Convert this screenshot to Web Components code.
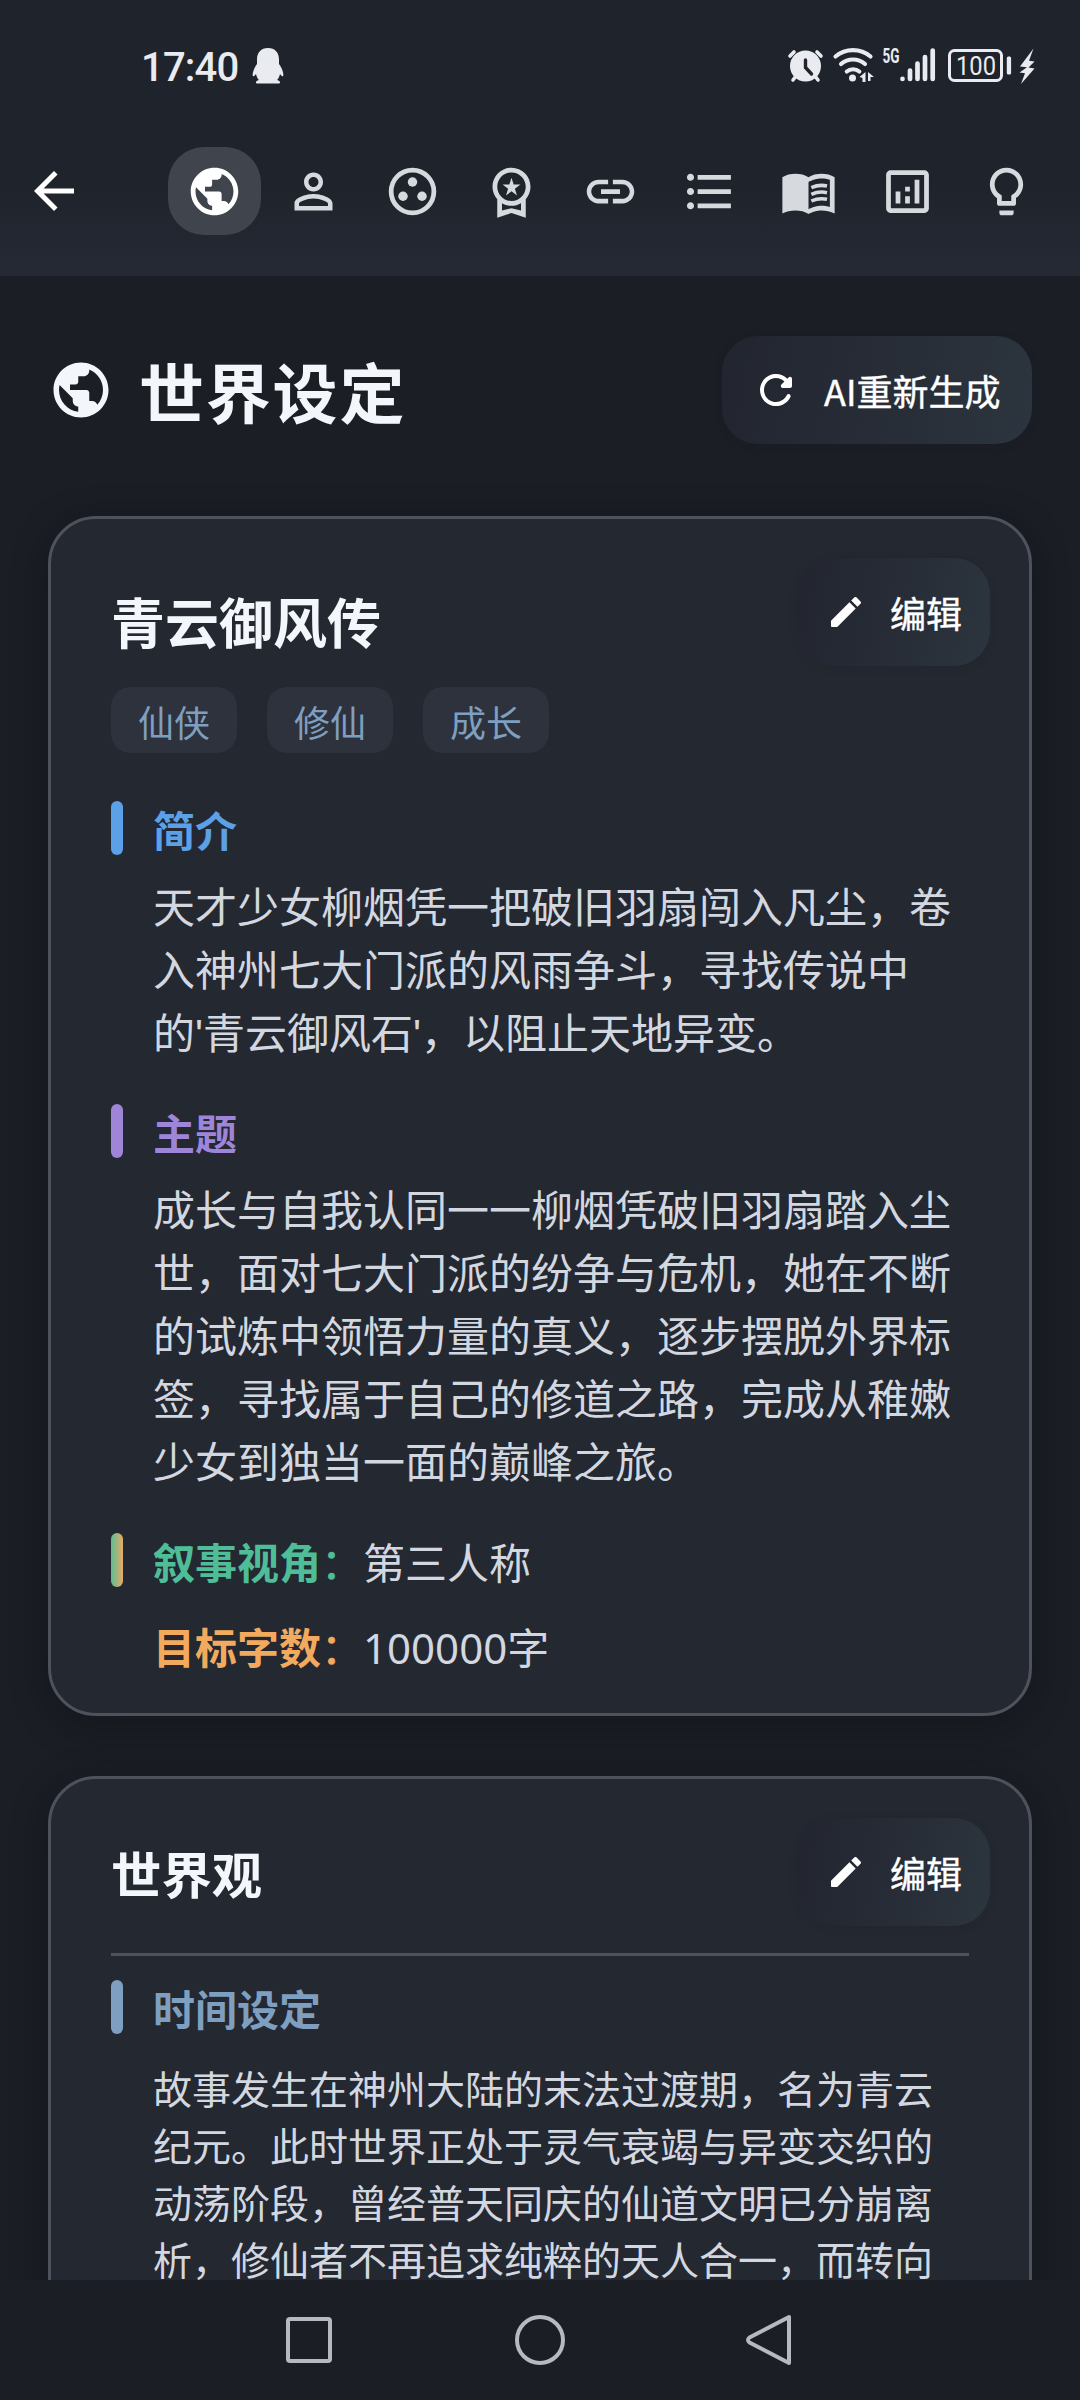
<!DOCTYPE html>
<html lang="zh-CN">
<head>
<meta charset="utf-8">
<title>世界设定</title>
<style>
html,body{margin:0;padding:0;background:#1b1e25}
body{width:1080px;height:2400px;overflow:hidden;font-family:"Noto Sans CJK SC",sans-serif;color:#d3d7e0}
.q{font-family:"Liberation Sans",sans-serif;line-height:0}
.n{font-family:"Noto Sans",sans-serif;line-height:0}
</style>
</head>
<body>
<app-screen>
  <status-bar slot="status" time="17:40"></status-bar>
  <tab-strip slot="tabs"></tab-strip>
  <page-title slot="content" label="世界设定"><pill-button slot="action" icon="refresh" size="48" wide>AI重新生成</pill-button></page-title>
  <setting-card slot="content" variant="book" heading="青云御风传">
    <tag-row><tag-chip>仙侠</tag-chip><tag-chip>修仙</tag-chip><tag-chip>成长</tag-chip></tag-row>
    <text-section label="简介" style="--accent:#5ca0e8">天才少女柳烟凭一把破旧羽扇闯入凡尘，卷<br>入神州七大门派的风雨争斗，寻找传说中<br>的<span class="q">'</span>青云御风石<span class="q">'</span>，以阻止天地异变。</text-section>
    <text-section label="主题" style="--accent:#9f85d8">成长与自我认同一一柳烟凭破旧羽扇踏入尘<br>世，面对七大门派的纷争与危机，她在不断<br>的试炼中领悟力量的真义，逐步摆脱外界标<br>签，寻找属于自己的修道之路，完成从稚嫩<br>少女到独当一面的巅峰之旅。</text-section>
    <field-row label="叙事视角" bar style="--accent:#4fbd98">第三人称</field-row>
    <field-row label="目标字数" style="--accent:#f2ab5e"><span class="n">100000</span>字</field-row>
  </setting-card>
  <setting-card slot="content" variant="world" heading="世界观">
    <text-section label="时间设定" small style="--accent:#7f9fc0">故事发生在神州大陆的末法过渡期，名为青云<br>纪元。此时世界正处于灵气衰竭与异变交织的<br>动荡阶段，曾经普天同庆的仙道文明已分崩离<br>析，修仙者不再追求纯粹的天人合一，而转向</text-section>
  </setting-card>
  <system-nav slot="nav"></system-nav>
</app-screen>
<script>
const ICONS = {
  back: '<path d="M20 11H7.83l5.59-5.59L12 4l-8 8 8 8 1.41-1.41L7.83 13H20v-2z"/>',
  globe: '<path d="M12 2C6.48 2 2 6.48 2 12s4.48 10 10 10 10-4.48 10-10S17.52 2 12 2zm-1 17.93c-3.95-.49-7-3.85-7-7.93 0-.62.08-1.21.21-1.79L9 15v1c0 1.1.9 2 2 2v1.93zm6.9-2.54c-.26-.81-1-1.39-1.9-1.39h-1v-3c0-.55-.45-1-1-1H8v-2h2c.55 0 1-.45 1-1V7h2c1.1 0 2-.9 2-2v-.41c2.93 1.19 5 4.06 5 7.41 0 2.08-.8 3.97-2.1 5.39z"/>',
  person: '<path d="M12 5.9c1.16 0 2.1.94 2.1 2.1s-.94 2.1-2.1 2.1S9.9 9.16 9.9 8s.94-2.1 2.1-2.1m0 9c2.97 0 6.1 1.46 6.1 2.1v1.1H5.9V17c0-.64 3.13-2.1 6.1-2.1M12 4C9.79 4 8 5.79 8 8s1.79 4 4 4 4-1.79 4-4-1.79-4-4-4zm0 9c-2.67 0-8 1.34-8 4v3h16v-3c0-2.66-5.33-4-8-4z"/>',
  group: '<circle cx="12" cy="12" r="9" fill="none" stroke="currentColor" stroke-width="2"/><circle cx="12" cy="8" r="2"/><circle cx="8" cy="14" r="2"/><circle cx="16" cy="14" r="2"/>',
  medal: '<path d="M9.68 13.69 12 11.93l2.31 1.76-.88-2.85L15.75 9h-2.84L12 6.19 11.09 9H8.25l2.31 1.84-.88 2.85zM20 10c0-4.42-3.58-8-8-8s-8 3.58-8 8c0 2.03.76 3.87 2 5.28V23l6-2 6 2v-7.72c1.24-1.41 2-3.25 2-5.28zm-8-6c3.31 0 6 2.69 6 6s-2.69 6-6 6-6-2.69-6-6 2.69-6 6-6zm0 15-4 1.02v-3.1c1.18.68 2.54 1.08 4 1.08s2.82-.4 4-1.08v3.1L12 19z"/>',
  link: '<path d="M3.9 12c0-1.71 1.39-3.1 3.1-3.1h4V7H7c-2.76 0-5 2.24-5 5s2.24 5 5 5h4v-1.9H7c-1.71 0-3.1-1.39-3.1-3.1zM8 13h8v-2H8v2zm9-6h-4v1.9h4c1.71 0 3.1 1.39 3.1 3.1s-1.39 3.1-3.1 3.1h-4V17h4c2.76 0 5-2.24 5-5s-2.24-5-5-5z"/>',
  list: '<path d="M4 10.5c-.83 0-1.5.67-1.5 1.5s.67 1.5 1.5 1.5 1.5-.67 1.5-1.5-.67-1.5-1.5-1.5zm0-6c-.83 0-1.5.67-1.5 1.5S3.17 7.5 4 7.5 5.5 6.83 5.5 6 4.83 4.5 4 4.5zm0 12c-.83 0-1.5.68-1.5 1.5s.68 1.5 1.5 1.5 1.5-.68 1.5-1.5-.67-1.5-1.5-1.5zM7 19h14v-2H7v2zm0-6h14v-2H7v2zm0-8v2h14V5H7z"/>',
  book: '<path fill-rule="evenodd" d="M17.5 4.5c-1.95 0-4.05.4-5.5 1.5-1.45-1.1-3.55-1.5-5.5-1.5S2.45 4.9 1 6v15.3C2.4 20.4 4.6 20 6.5 20s4.05.4 5.5 1.5c1.35-.85 3.8-1.5 5.5-1.5 1.65 0 3.9.4 5.5 1.3V6c-1.5-1.1-3.55-1.5-5.5-1.5zM21 18.5c-1.1-.35-2.3-.5-3.5-.5-1.7 0-4.15.65-5.5 1.5V8c1.35-.85 3.8-1.5 5.5-1.5 1.2 0 2.4.15 3.5.5v11.5z"/><path d="M13.2 10.4c2-.9 4.5-1.2 6.6-.7M13.2 13.2c2-.9 4.500-1.200 6.600-.7M13.2 16c2-.9 4.500-1.200 6.600-.7" fill="none" stroke="currentColor" stroke-width="1.500"/>',
  chart: '<path d="M19 3H5c-1.100 0-2 .9-2 2v14c0 1.100.9 2 2 2h14c1.100 0 2-.9 2-2V5c0-1.100-.9-2-2-2zm0 16H5V5h14v14zM7 12h2v5H7zM15 7h2v10h-2zM11 14h2v3h-2zM11 10h2v2h-2z"/>',
  bulb: '<path d="M9 21c0 .55.45 1 1 1h4c.55 0 1-.45 1-1v-1H9v1zm3-19C8.14 2 5 5.14 5 9c0 2.38 1.19 4.47 3 5.74V17c0 .55.45 1 1 1h6c.55 0 1-.45 1-1v-2.26c1.81-1.27 3-3.36 3-5.74 0-3.86-3.14-7-7-7zm2.85 11.1l-.85.6V16h-4v-2.3l-.85-.6C7.8 12.16 7 10.63 7 9c0-2.76 2.24-5 5-5s5 2.24 5 5c0 1.63-.8 3.16-2.15 4.1z"/>',
  refresh: '<path d="M17.65 6.35c-1.63-1.63-3.94-2.57-6.48-2.31-3.67.37-6.69 3.35-7.1 7.02C3.52 15.91 7.27 20 12 20c3.19 0 5.93-1.87 7.21-4.56.32-.67-.16-1.44-.9-1.44-.37 0-.72.2-.88.53-1.13 2.43-3.84 3.97-6.8 3.31-2.22-.49-4.01-2.3-4.48-4.52C5.31 9.44 8.26 6 12 6c1.66 0 3.14.69 4.22 1.78l-1.51 1.51c-.63.63-.19 1.71.7 1.71H19c.55 0 1-.45 1-1V6.41c0-.89-1.08-1.34-1.71-.71l-.64.65z"/>',
  edit: '<path d="M3 17.46v3.04c0 .28.22.5.5.5h3.04c.13 0 .26-.05.35-.15L17.81 9.94l-3.75-3.75L3.15 17.1c-.1.1-.15.22-.15.36zM20.71 7.04c.39-.39.39-1.02 0-1.41l-2.34-2.34c-.39-.39-1.02-.39-1.41 0l-1.83 1.83 3.75 3.75 1.83-1.83z"/>'
};
const icon = (n, s) => `<svg width="${s}" height="${s}" viewBox="0 0 24 24" fill="currentColor">${ICONS[n]}</svg>`;
const define = (name, render) => customElements.define(name, class extends HTMLElement {
  constructor() { super(); this.attachShadow({ mode: 'open' }); }
  connectedCallback() { this.shadowRoot.innerHTML = '<style>:host,*{box-sizing:border-box}svg{display:block;flex:none}</style>' + render(this); }
});

define('app-screen', () => `<style>
:host{display:flex;flex-direction:column;width:1080px;height:2400px;background:#1b1e25}
header{height:276px;flex:none;background:linear-gradient(#1f242c 0,#1f242c 68%,#252934 100%)}
main{flex:1;min-height:0;overflow:hidden;padding:60px 48px 0;display:flex;flex-direction:column}
footer{height:120px;flex:none}</style>
<header><slot name="status"></slot><slot name="tabs"></slot></header><main><slot name="content"></slot></main><footer><slot name="nav"></slot></footer>`);

define('status-bar', el => `<style>
:host{display:flex;align-items:center;justify-content:space-between;height:132px;padding:0 44px 0 141px;color:#e9ebf0}
div{display:flex;align-items:center}
b{font:500 40px/44px Roboto,sans-serif;letter-spacing:-.8px;margin-right:13px;padding-top:4px}
text{font-family:Roboto,sans-serif}</style>
<div><b>${el.getAttribute('time')}</b><svg width="32" height="36" viewBox="0 0 32 36" fill="currentColor"><path d="M16 0C9 0 5 4.500 5 11.500V16c-3 4-4.600 8.500-4.300 11.500.2 1.500 1.600.8 3.300-1.500.5 2.300 1.400 4.300 2.900 6-1.900.5-2.900 1.200-2.900 2.400 0 .8.600 1.100 1.500 1.100h21c.9 0 1.500-.3 1.500-1.100 0-1.200-1-1.900-2.900-2.400 1.500-1.700 2.400-3.700 2.900-6 1.700 2.300 3.100 3 3.300 1.500.3-3-1.300-7.500-4.300-11.500v-4.500C27 4.500 23 0 16 0z"/></svg></div>
<div><svg width="250" height="52" viewBox="786 40 250 52" fill="currentColor">
<circle cx="805.500" cy="66" r="15.500"/><g fill="none" stroke="currentColor" stroke-width="3.600" stroke-linecap="round"><path d="M790 56l4-4M821 56l-4-4M793 80l3-4M818 80l-3-4"/></g><path d="M805.500 60v7.500l6 6.500" fill="none" stroke="#1f242c" stroke-width="3.400" stroke-linecap="round"/>
<g fill="none" stroke="currentColor" stroke-width="4.200" stroke-linecap="round"><path d="M835.500 56.500c10-8.500 25-8.500 35 0M841 64c7-6 17-6 24 0M846.800 71.500c3.500-3 9-3 12.500 0"/></g><circle cx="852.500" cy="78" r="3.500"/><path d="M859.500 77l6-5v10h-3v-4zM868 72l6 5h-3.500v4H868z"/>
<text x="882.500" y="63" font-size="21" font-weight="700" textLength="17" lengthAdjust="spacingAndGlyphs">5G</text>
<g fill="none" stroke="currentColor" stroke-width="4.700" stroke-linecap="round"><path d="M902.500 79v-.1M910 79v-8.500M917.500 79v-15.500M925 79v-22M932.700 79v-28.500"/></g>
<rect x="949.500" y="50.500" width="52" height="30" rx="5" fill="none" stroke="currentColor" stroke-width="3"/><rect x="1006.800" y="56.500" width="4.300" height="18" rx="1.500"/>
<text x="956" y="75" font-size="25" textLength="40" lengthAdjust="spacingAndGlyphs">100</text>
<path d="M1033.500 48.500L1020 66.500l7 .8-7.500 5.200 5.500.8-4 10.700 13.500-15.500-6-1 6-6-5.500-.8z"/></svg></div>`);

define('tab-strip', () => `<style>
:host{display:flex;align-items:center;height:118px;padding-left:24px;color:#d6d9dd}
.back{color:#fff;margin-right:84px}
nav{display:flex;gap:5.950px}
span{display:flex;align-items:center;justify-content:center;width:93px;height:88px;border-radius:36px}
.on{background:#40444d;color:#fff}</style>
<div class="back">${icon('back', 60)}</div>
<nav>${['globe','person','group','medal','link','list','book','chart','bulb'].map((n, i) => `<span class="${i ? '' : 'on'}">${icon(n, 57)}</span>`).join('')}</nav>`);

define('page-title', el => `<style>
:host{display:flex;align-items:center;height:108px;margin-bottom:72px;flex:none;color:#f3f6fa}
h1{font-size:65px;line-height:96px;font-weight:700;letter-spacing:1.800px;margin:0 auto 0 25px}</style>
${icon('globe', 66)}<h1>${el.getAttribute('label')}</h1><slot name="action"></slot>`);

define('pill-button', el => {
  const wide = el.hasAttribute('wide');
  return `<style>
:host{display:flex;align-items:center;flex:none;width:${wide ? 310 : 192}px;height:108px;padding-left:${wide ? 30 : 28}px;border-radius:36px;background:linear-gradient(100deg,#22252f,#272c36 50%,#2c353f);color:#fff;font-size:36px;line-height:54px;box-shadow:0 2px 10px rgba(22,25,33,.12);white-space:nowrap;-webkit-text-stroke:.4px #fff}
span{margin-left:24px}</style>${icon(el.getAttribute('icon'), el.getAttribute('size'))}<span><slot></slot></span>`;
});

define('setting-card', el => {
  const world = el.getAttribute('variant') === 'world';
  return `<style>
:host{display:block;flex:none;height:1200px;margin-bottom:60px;border:3px solid #4e525c;border-radius:48px;background:#242830;box-shadow:0 8px 36px rgba(10,12,16,.4);padding:39px 39px 0 60px}
.top{display:flex;height:108px;justify-content:space-between;align-items:${world ? 'center' : 'flex-start'}}
h2{margin:${world ? 2 : 23}px 0 0;color:#f3f6fa;font-weight:700;font-size:${world ? 50.4 : 54}px;line-height:80px}
hr{border:0;height:3px;background:#4e525c;margin:27px 21px 24px 0}</style>
<div class="top"><h2>${el.getAttribute('heading')}</h2><pill-button icon="edit" size="40">编辑</pill-button></div>${world ? '<hr>' : ''}<slot></slot>`;
});

define('tag-row', () => `<style>:host{display:flex;gap:30px;margin:21px 0 48px}</style><slot></slot>`);
define('tag-chip', () => `<style>:host{display:flex;width:126px;height:66px;padding-top:1px;align-items:center;justify-content:center;border-radius:20px;background:#2d323d;color:#7f9fc0;font-size:36px;line-height:54px}</style><slot></slot>`);

define('text-section', el => {
  const small = el.hasAttribute('small');
  return `<style>
:host{display:block;margin-bottom:42.500px}
.head{display:flex;align-items:center;height:54px;gap:30px;color:var(--accent)}
i{width:12px;height:54px;border-radius:6px;background:var(--accent)}
h3{margin:0;padding-top:2px;font-size:42px;line-height:54px;font-weight:700}
p{margin:${small ? 25 : 17.5}px 0 0 42px;font-size:${small ? 39 : 42}px;line-height:${small ? 57 : 63}px;white-space:nowrap}</style>
<div class="head"><i></i><h3>${el.getAttribute('label')}</h3></div><p><slot></slot></p>`;
});

define('field-row', el => `<style>
:host{display:flex;align-items:center;height:54px;margin-bottom:31px;font-size:42px;line-height:54px}
i{width:12px;height:54px;border-radius:6px;margin-right:30px;background:${el.hasAttribute('bar') ? 'linear-gradient(90deg,#5cbd92,#e8ab68)' : 'none'}}
b,span{padding-top:2px}
b{color:var(--accent);font-weight:700}
em{font-style:normal;font-weight:400;-webkit-text-stroke:.6px var(--accent)}</style><i></i><b>${el.getAttribute('label')}<em>：</em></b><span><slot></slot></span>`);

define('system-nav', () => `<style>
:host{display:flex;align-items:center;justify-content:center;height:120px;gap:180px;color:#b6b9bd}</style>
${['<rect x="6" y="5" width="42" height="42" rx="2"/>','<circle cx="26" cy="26" r="23"/>','<path d="M43 3v46L3.500 28.500q-3-2.500 0-5z"/>'].map(s => `<svg width="52" height="52" viewBox="0 0 52 52" fill="none" stroke="currentColor" stroke-width="4" stroke-linejoin="round">${s}</svg>`).join('')}`);
</script>
</body>
</html>
